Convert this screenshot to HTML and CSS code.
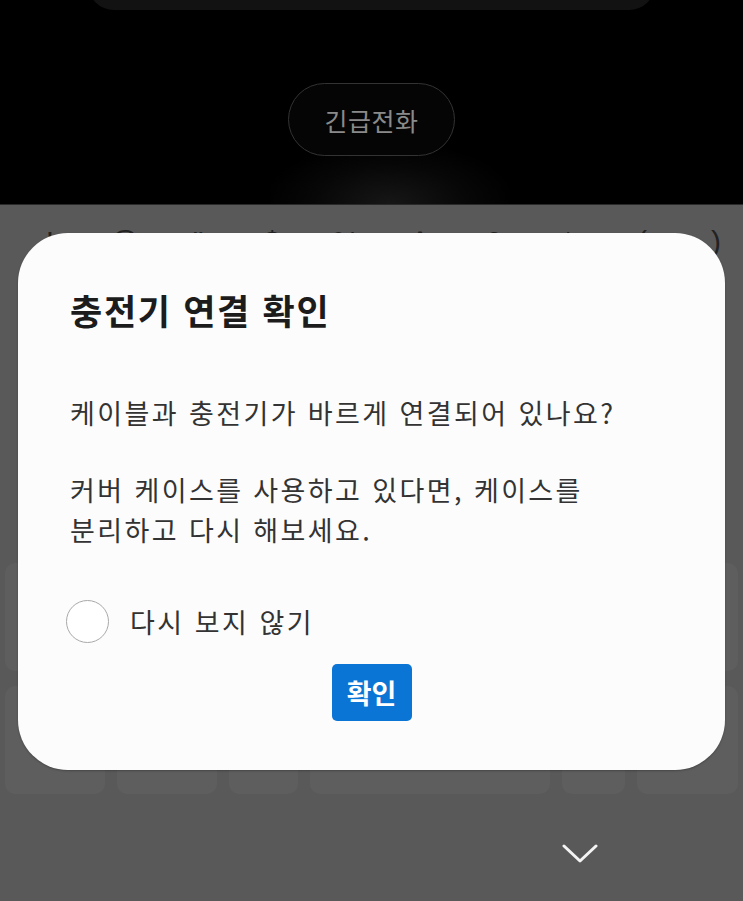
FILE: index.html
```html
<!DOCTYPE html>
<html lang="ko">
<head>
<meta charset="utf-8">
<link rel="stylesheet" href="styles.css">
</head>
<body>
<div class="screen">
  <section class="lock">
    <div class="lock-card"></div>
    <button class="emergency">긴급전화</button>
    <div class="glow"></div>
  </section>
  <section class="keyboard">
    <div class="symbols">
      <span>!</span><span>@</span><span>"</span><span>$</span><span>%</span><span>^</span><span>&amp;</span><span>*</span><span>(</span><span>)</span>
    </div>
    <div class="keys">
      <div class="row row-a"><i></i><i></i><i></i><i></i><i></i><i></i></div>
      <div class="row row-b"><i></i><i></i><i></i><i></i><i></i><i></i></div>
    </div>
    <div class="hide-bar">
      <svg class="chevron" width="36" height="20" viewBox="0 0 36 20"><path d="M2 3 L18 18 L34 3" fill="none" stroke="#f4f4f4" stroke-width="3" stroke-linecap="round" stroke-linejoin="round"/></svg>
    </div>

    <div class="dialog">
      <h1 class="title">충전기 연결 확인</h1>
      <p class="msg">케이블과 충전기가 바르게 연결되어 있나요?</p>
      <p class="msg msg2">커버 케이스를 사용하고 있다면, 케이스를<br>분리하고 다시 해보세요.</p>
      <label class="check">
        <span class="circle"></span>
        <span class="check-label">다시 보지 않기</span>
      </label>
      <div class="actions">
        <button class="ok">확인</button>
      </div>
    </div>
  </section>
</div>
</body>
</html>
```

FILE: styles.css
```css
* { box-sizing: border-box; }
html, body { margin: 0; padding: 0; background: #000; }
body { font-family: "Noto Sans CJK KR", "Noto Sans", sans-serif; }

.screen {
  width: 743px;
  height: 901px;
  overflow: hidden;
  display: flex;
  flex-direction: column;
}

.lock {
  position: relative;
  height: 205px;
  background: #000;
  display: flex;
  flex-direction: column;
  align-items: center;
  border-bottom: 1px solid #2a2a2a;
}
.lock-card {
  width: 567px;
  height: 40px;
  margin-top: -30px;
  background: #121212;
  border-radius: 0 0 26px 26px;
}
.emergency {
  margin-top: 43px;
  transform: translateY(30px);
  width: 167px;
  height: 73px;
  border-radius: 37px;
  border: 1.5px solid #333;
  background: #050505;
  color: #8a8a8a;
  font-family: "Noto Sans CJK KR", sans-serif;
  font-size: 25px;
  letter-spacing: 0.5px;
  padding: 0;
  position: relative;
  z-index: 1;
}
.glow {
  position: absolute;
  left: 270px;
  bottom: 0;
  width: 240px;
  height: 60px;
  background: radial-gradient(ellipse at 50% 100%, rgba(28,28,28,0.8) 0%, rgba(14,14,14,0.5) 45%, rgba(0,0,0,0) 75%);
}

.keyboard {
  position: relative;
  flex: 1;
  background: #595959;
  display: flex;
  flex-direction: column;
}
.symbols {
  height: 60px;
  display: grid;
  grid-template-columns: repeat(10, 74px);
  padding-left: 13px;
  color: #222;
  font-family: "Liberation Sans", sans-serif;
  font-size: 30px;
  line-height: 34px;
}
.symbols span { text-align: center; padding-top: 20px; }

.keys {
  display: flex;
  flex-direction: column;
  gap: 15px;
  padding: 0 5px;
  margin-top: 298px;
}
.row {
  height: 108px;
  display: grid;
  gap: 12px;
}
.row i {
  display: block;
  background: #5e5e5e;
  border-radius: 10px;
}
.row-a { grid-template-columns: repeat(6, 1fr); }
.row-b { grid-template-columns: 100px 100px 69px 240px 63px 101px; }

.hide-bar {
  flex: 1;
  position: relative;
}
.chevron {
  position: absolute;
  left: 562px;
  top: 49px;
}

.dialog {
  position: absolute;
  left: 18px;
  top: 28px;
  width: 707px;
  height: 537px;
  background: #fcfcfc;
  border-radius: 50px;
  padding: 55px 52px 49px 52px;
  display: flex;
  flex-direction: column;
  box-shadow: 0 1px 2px rgba(0,0,0,0.25);
}
.title {
  margin: 0;
  font-size: 35px;
  line-height: 44px;
  font-weight: 700;
  color: #1c1c1c;
  letter-spacing: 1.7px;
}
.msg {
  margin: 61px 0 0;
  font-size: 27px;
  line-height: 40px;
  color: #333;
  letter-spacing: 2.4px;
  white-space: nowrap;
}
.msg2 { margin-top: 37px; }

.check {
  margin-top: 49px;
  height: 44px;
  display: flex;
  align-items: center;
  margin-left: -4px;
}
.circle {
  width: 43px;
  height: 43px;
  border-radius: 50%;
  border: 1.5px solid #a9a9a9;
  background: #fff;
}
.check-label {
  margin-left: 21px;
  font-size: 27px;
  color: #333;
  letter-spacing: 2.5px;
}

.actions {
  margin-top: 21px;
  display: flex;
  justify-content: center;
}
.ok {
  width: 80px;
  height: 57px;
  background: #0b75d5;
  color: #fff;
  border: 0;
  border-radius: 5px;
  font-family: "Noto Sans CJK KR", sans-serif;
  font-weight: 700;
  font-size: 27px;
  padding: 0;
}
```
